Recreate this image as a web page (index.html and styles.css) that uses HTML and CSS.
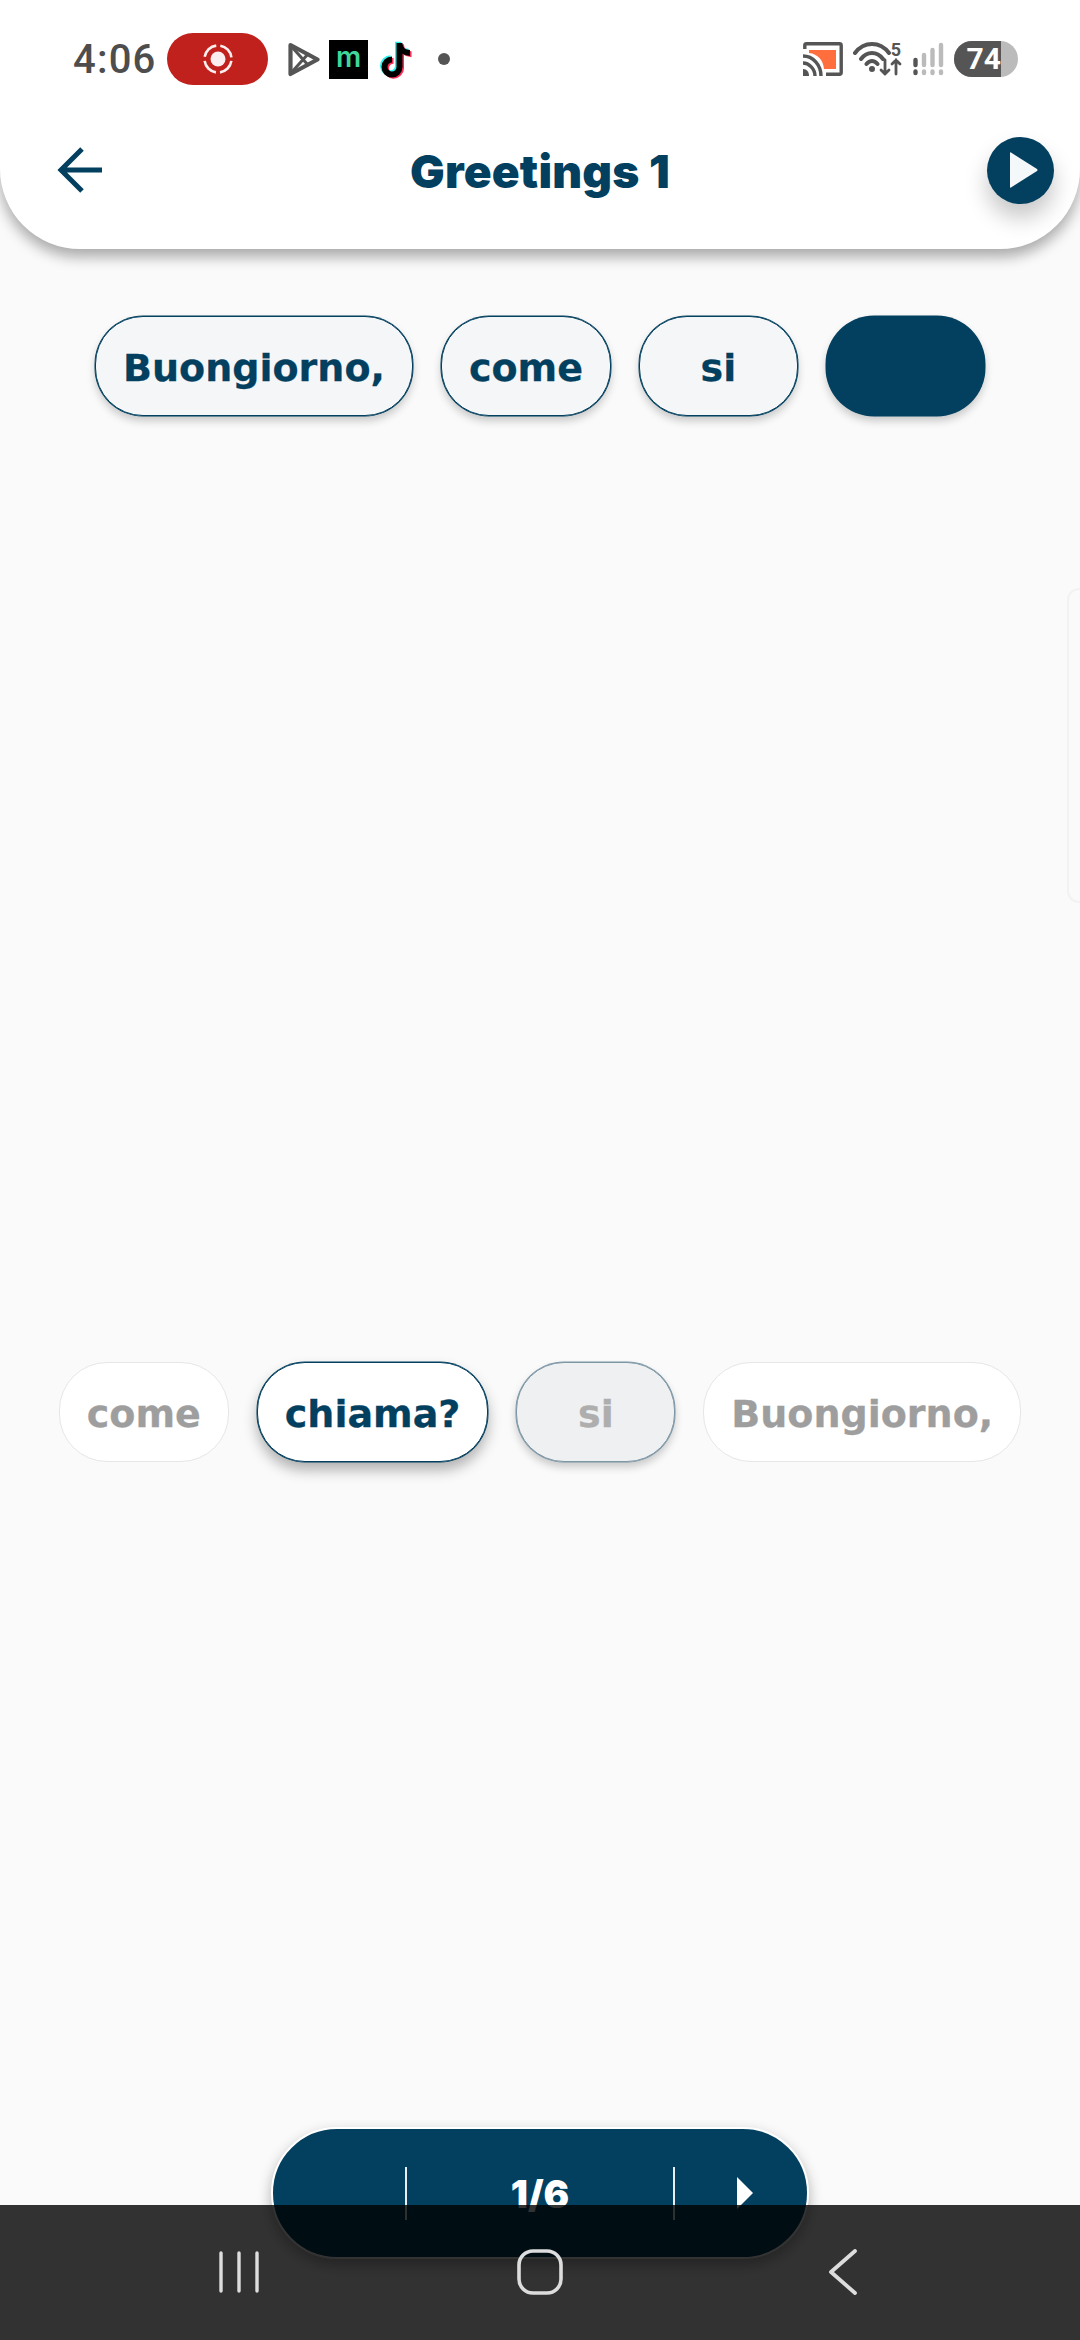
FILE: index.html
```html
<!DOCTYPE html>
<html lang="it">
<head>
	<meta charset="utf-8">
	<title>Greetings 1</title>
	<link rel="stylesheet" href="styles.css">
</head>
<body>
	<div class="page">

		<header class="header">
			<div class="status">
				<div class="status-left">
					<span class="time">4:06</span>
					<span class="rec">
						<svg width="32" height="32" viewBox="0 0 32 32" fill="none">
							<circle cx="16" cy="16" r="7.5" fill="#fbeeee"/>
							<circle cx="16" cy="16" r="13.5" stroke="#fbeeee" stroke-width="2.6" stroke-dasharray="17 4.2" stroke-dashoffset="-2"/>
						</svg>
					</span>
					<svg class="ic-play" width="32" height="35" viewBox="0 0 32 35" fill="none" stroke="#555" stroke-linejoin="round" stroke-linecap="round">
						<path d="M2.500 3 L29.500 17.500 L2.500 32 Z" stroke-width="4.200"/>
						<path d="M3 4 L20 23 M3 31 L20 12" stroke-width="3"/>
					</svg>
					<span class="ic-m">m</span>
					<svg class="ic-tiktok" width="34" height="39" viewBox="0 0 34 39" fill="none" stroke-width="6">
						<path d="M20.500 3 V27 A7.500 7.500 0 1 1 13 19.500 M20.500 4 C21 10 26 13 31 13" stroke="#25f4ee" transform="translate(-1.500 -1.200)"/>
						<path d="M20.500 3 V27 A7.500 7.500 0 1 1 13 19.500 M20.500 4 C21 10 26 13 31 13" stroke="#fe2c55" transform="translate(1.500 1.200)"/>
						<path d="M20.500 3 V27 A7.500 7.500 0 1 1 13 19.500 M20.500 4 C21 10 26 13 31 13" stroke="#000"/>
					</svg>
					<span class="dot"></span>
				</div>
				<div class="status-right">
					<svg class="ic-cast" width="40" height="34" viewBox="0 0 40 34" fill="none">
						<path d="M1.800 7 V3.500 Q1.800 1.800 3.500 1.800 H36.500 Q38.200 1.800 38.200 3.500 V30.500 Q38.200 32.200 36.500 32.200 H23" stroke="#555" stroke-width="3.400"/>
						<path d="M6 8 H33 V27 H21 C20 18 15 12 6 11 Z" fill="#ff6e3c"/>
						<path d="M0 14 C10 14 18 23 18 34 M0 21 C6 21 12 27 12 34" stroke="#555" stroke-width="3.400"/>
						<path d="M0 27 C4 27 6 30 6 34 H0 Z" fill="#555"/>
					</svg>
					<span class="wifi">
						<svg width="49" height="34" viewBox="0 0 49 34" fill="none" stroke="#555" stroke-linecap="round">
							<path d="M2 11 C11 -1 27 -1 36 11 M8 17 C14 9 24 9 30 17 M13.500 22 C17 18 21 18 24.500 22" stroke-width="4"/>
							<circle cx="19" cy="27" r="3" fill="#555" stroke="none"/>
							<path d="M32 18 V32 M28 28 L32 32 L36 28 M43 32 V18 M39 22 L43 18 L47 22" stroke-width="2.800"/>
						</svg>
						<span class="wifi-num">5</span>
					</span>
					<svg class="ic-signal" width="31" height="34" viewBox="0 0 31 34" stroke-linecap="round" stroke-width="4.400" fill="none">
						<path d="M2.500 18 V23 M2.500 29.500 V31" stroke="#555"/>
						<path d="M11 13 V23 M11 29.500 V31 M19.500 8 V23 M19.500 29.500 V31 M28 3 V23 M28 29.500 V31" stroke="#bbb"/>
					</svg>
					<span class="battery"><span class="level">74</span></span>
				</div>
			</div>

			<div class="toolbar">
				<svg class="back" width="46" height="46" viewBox="0 0 46 46" fill="none" stroke="#03405f" stroke-width="5">
					<path d="M45 23 H4 M25 2 L4 23 L25 44"/>
				</svg>
				<h1 class="title">Greetings 1</h1>
				<button class="play">
					<svg width="28" height="36" viewBox="0 0 28 36"><path d="M0 1 Q0 0 1 0.500 L27 17 Q28 18 27 19 L1 35.500 Q0 36 0 35 Z" fill="#f4f8fa"/></svg>
				</button>
			</div>
		</header>

		<div class="chips answer">
			<span class="chip">Buongiorno,</span>
			<span class="chip">come</span>
			<span class="chip">si</span>
			<span class="chip blank"></span>
		</div>

		<div class="chips words">
			<span class="chip off">come</span>
			<span class="chip active">chiama?</span>
			<span class="chip used">si</span>
			<span class="chip off">Buongiorno,</span>
		</div>

		<div class="side-handle"></div>

		<div class="pager">
			<div class="pager-side"></div>
			<div class="pager-count">1/6</div>
			<div class="pager-side pager-next"><span class="next-arrow"></span></div>
		</div>

		<nav class="navbar">
			<svg width="40" height="42" viewBox="0 0 40 42" stroke="#ddd" stroke-width="3.400" stroke-linecap="round">
				<path d="M2 2 V40 M20 2 V40 M38 2 V40"/>
			</svg>
			<svg width="46" height="46" viewBox="0 0 46 46" fill="none" stroke="#ddd" stroke-width="3.600">
				<rect x="2" y="2" width="42" height="42" rx="14"/>
			</svg>
			<svg width="46" height="46" viewBox="0 0 46 46" fill="none" stroke="#ddd" stroke-width="3.800" stroke-linecap="round" stroke-linejoin="round">
				<path d="M34 2 L10 23 L34 44"/>
			</svg>
		</nav>

	</div>
</body>
</html>
```

FILE: styles.css
```css
* { box-sizing: border-box; }

body {
	margin: 0;
	background: #fafafa;
	font-family: "DejaVu Sans", "Liberation Sans", sans-serif;
}

.page {
	position: relative;
	width: 1080px;
	height: 2340px;
	overflow: hidden;
}

/* header */
.header {
	height: 249px;
	background: #fff;
	border-radius: 0 0 80px 80px;
	box-shadow: 0 8px 14px rgba(0,0,0,.32);
}

.status {
	display: flex;
	justify-content: space-between;
	align-items: center;
	height: 118px;
	padding: 0 62px 0 73px;
}
.status-left, .status-right {
	display: flex;
	align-items: center;
}

.time {
	width: 94px;
	font-family: "Roboto", sans-serif;
	font-size: 40px;
	font-weight: 500;
	color: #4d4d4d;
	letter-spacing: 1.2px;
}

.rec {
	display: flex;
	align-items: center;
	justify-content: center;
	width: 101px;
	height: 52px;
	border-radius: 26px;
	background: #c0211c;
}

.ic-play { margin-left: 20px; }

.ic-m {
	width: 39px;
	height: 39px;
	margin-left: 9px;
	background: #000;
	color: #3fd69a;
	font-family: "Inter", sans-serif;
	font-size: 28px;
	font-weight: 600;
	line-height: 34px;
	text-align: center;
}

.ic-tiktok { margin-left: 11px; }

.dot {
	width: 12px;
	height: 12px;
	margin-left: 25px;
	border-radius: 50%;
	background: #555;
}

.ic-cast { margin-right: 10px; }

.wifi { position: relative; display: flex; margin-right: 11px; }
.wifi-num {
	position: absolute;
	top: -3px;
	right: 1px;
	font-family: "Roboto", sans-serif;
	font-size: 18px;
	font-weight: 700;
	color: #555;
}

.ic-signal { margin-right: 10px; }

.battery {
	display: block;
	width: 64px;
	height: 36px;
	border-radius: 18px;
	background: #bbb;
	overflow: hidden;
}
.level {
	display: block;
	width: 47px;
	height: 36px;
	background: #555;
	color: #fff;
	font-family: "Roboto", sans-serif;
	font-size: 30px;
	font-weight: 700;
	line-height: 36px;
	text-align: right;
}

.toolbar {
	display: grid;
	grid-template-columns: 1fr auto 1fr;
	align-items: center;
	height: 104px;
	padding: 0 26px;
}
.back { margin-left: 31px; }
.title {
	margin: 0;
	padding-top: 1px;
	color: #03405f;
	font-family: "Inter", sans-serif;
	font-size: 46px;
	font-weight: 900;
	letter-spacing: .2px;
}
.play {
	justify-self: end;
	display: flex;
	align-items: center;
	justify-content: center;
	width: 67px;
	height: 67px;
	padding: 0 0 0 6px;
	border: none;
	border-radius: 50%;
	background: #03405f;
	box-shadow: 0 14px 22px rgba(0,0,0,.22);
}

/* chips */
.chips {
	display: flex;
	justify-content: center;
	gap: 28px;
}
.answer { margin-top: 67px; }
.words { margin-top: 946px; }

.chip {
	display: block;
	min-width: 159px;
	height: 100px;
	padding: 0 27px;
	border: 1px solid #03405f;
	border-radius: 48px;
	background: #f4f6f7;
	box-shadow: 0 0 0 .5px #03405f, 0 5px 8px rgba(0,0,0,.2);
	color: #03405f;
	font-size: 38px;
	font-weight: 700;
	-webkit-text-stroke: .3px;
	line-height: 102px;
	text-align: center;
}
.chip.blank { background: #03405f; }
.chip.off {
	background: #fff;
	border-color: #e6e6e6;
	box-shadow: none;
	color: #9e9e9e;
}
.chip.active {
	background: #fff;
	box-shadow: 0 0 0 .5px #03405f, 0 8px 14px rgba(0,0,0,.3);
}
.chip.used {
	background: #eff0f2;
	border-color: #7d97a6;
	box-shadow: 0 0 0 .5px #7d97a6, 0 5px 8px rgba(0,0,0,.2);
	color: #aeaeae;
}

/* faint drawer handle on the right edge */
.side-handle {
	position: absolute;
	top: 588px;
	right: -14px;
	width: 27px;
	height: 315px;
	border: 2px solid #f2f2f2;
	border-radius: 12px;
}

/* pager sits under the translucent nav bar */
.pager {
	position: absolute;
	left: 271px;
	top: 2127px;
	display: flex;
	align-items: center;
	width: 538px;
	height: 132px;
	border: 2px solid #fff;
	border-radius: 66px;
	background: #03405f;
	box-shadow: 0 6px 14px rgba(0,0,0,.3);
}
.pager-side { width: 132px; height: 53px; }
.pager-count {
	width: 270px;
	height: 53px;
	border-left: 2px solid #e8eef1;
	border-right: 2px solid #e8eef1;
	color: #fff;
	font-family: "Inter", sans-serif;
	font-size: 38px;
	font-weight: 900;
	line-height: 54px;
	text-align: center;
}
.pager-next { display: flex; align-items: center; padding-left: 62px; }
.next-arrow {
	width: 0;
	height: 0;
	border-left: 16px solid #fff;
	border-top: 16px solid transparent;
	border-bottom: 16px solid transparent;
}

.navbar {
	position: absolute;
	left: 0;
	bottom: 0;
	display: flex;
	justify-content: space-between;
	align-items: center;
	width: 100%;
	height: 135px;
	padding: 44px 213px 46px 219px;
	background: rgba(0,0,0,.8);
}
```
